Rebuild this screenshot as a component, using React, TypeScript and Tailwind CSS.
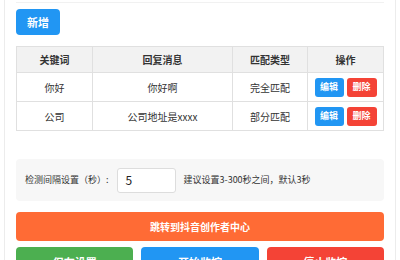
const rows = [
  { keyword: '你好', reply: '你好啊', type: '完全匹配' },
  { keyword: '公司', reply: '公司地址是xxxx', type: '部分匹配' },
]

export default function App() {
  return (
    <div
      className="w-[400px] h-[260px] overflow-hidden bg-white"
      style={{ fontFamily: '"Noto Sans CJK SC", "Noto Sans", sans-serif' }}
    >
      <div className="mx-[4px] h-[300px] border-x border-[#ececec] px-[11px]">
        <div className="h-[3px] border-b border-[#f1f1f1]" />
        <button className="mt-[6px] h-[26px] w-[44px] rounded-[4px] bg-[#2196f3] text-[11px] font-bold text-white">
          新增
        </button>

        <table className="mt-[11px] w-full border-collapse text-[10px] text-[#333]">
          <thead>
            <tr className="h-[26px] bg-[#f2f2f2]">
              <th className="w-[76px] border border-[#e0e0e0] font-bold">关键词</th>
              <th className="w-[140px] border border-[#e0e0e0] font-bold">回复消息</th>
              <th className="w-[75px] border border-[#e0e0e0] font-bold">匹配类型</th>
              <th className="border border-[#e0e0e0] font-bold">操作</th>
            </tr>
          </thead>
          <tbody>
            {rows.map((r) => (
              <tr key={r.keyword} className="h-[29px]">
                <td className="border border-[#e0e0e0] text-center">{r.keyword}</td>
                <td className="border border-[#e0e0e0] text-center">{r.reply}</td>
                <td className="border border-[#e0e0e0] text-center">{r.type}</td>
                <td className="border border-[#e0e0e0]">
                  <div className="flex justify-center gap-[3px]">
                    <button className="h-[19px] w-[29px] rounded-[3px] bg-[#2196f3] text-[9px] font-bold text-white">
                      编辑
                    </button>
                    <button className="h-[19px] w-[30px] rounded-[3px] bg-[#f44336] text-[9px] font-bold text-white">
                      删除
                    </button>
                  </div>
                </td>
              </tr>
            ))}
          </tbody>
        </table>

        <div className="mt-[28px] flex h-[42px] items-center rounded-[4px] bg-[#f7f7f7] px-[9px] text-[9px] text-[#333]">
          <span>检测间隔设置（秒）:</span>
          <div className="ml-[8px] flex h-[25px] w-[59px] items-center rounded-[3px] border border-[#dddddd] bg-white px-[8px] text-[12px] text-[#222]">
            5
          </div>
          <span className="ml-[8px]">建议设置3-300秒之间，默认3秒</span>
        </div>

        <button className="mt-[11px] h-[29px] w-full rounded-[4px] bg-[#ff6b35] text-[10px] font-bold text-white">
          跳转到抖音创作者中心
        </button>

        <div className="mt-[6px] flex gap-[8px]">
          <button className="h-[29px] flex-1 rounded-[4px] bg-[#4caf50] pt-[2px] text-[11px] font-bold text-white">
            保存设置
          </button>
          <button className="h-[29px] flex-1 rounded-[4px] bg-[#2196f3] pt-[2px] text-[11px] font-bold text-white">
            开始监控
          </button>
          <button className="h-[29px] flex-1 rounded-[4px] bg-[#f44336] pt-[2px] text-[11px] font-bold text-white">
            停止监控
          </button>
        </div>
      </div>
    </div>
  )
}
